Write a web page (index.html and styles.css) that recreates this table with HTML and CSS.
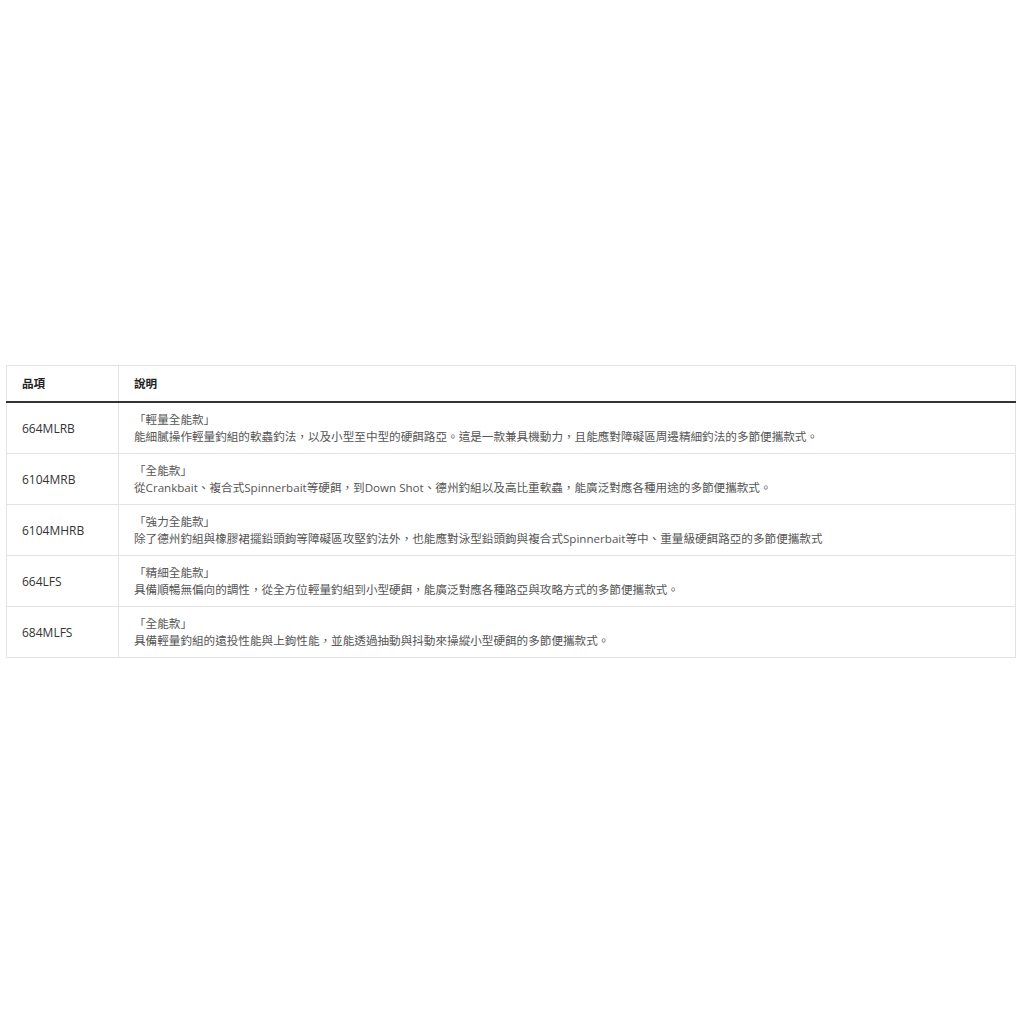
FILE: index.html
```html
<!DOCTYPE html>
<html lang="zh-Hant">
<head>
<meta charset="utf-8">
<link rel="stylesheet" href="styles.css">
</head>
<body>
<div class="page">
<table class="spec">
  <thead>
    <tr><th class="col-model">品項</th><th>說明</th></tr>
  </thead>
  <tbody>
    <tr><td class="model">664MLRB</td><td class="desc">「輕量全能款」<br>能細膩操作輕量釣組的軟蟲釣法，以及小型至中型的硬餌路亞。這是一款兼具機動力，且能應對障礙區周邊精細釣法的多節便攜款式。</td></tr>
    <tr><td class="model">6104MRB</td><td class="desc">「全能款」<br>從Crankbait、複合式Spinnerbait等硬餌，到Down Shot、德州釣組以及高比重軟蟲，能廣泛對應各種用途的多節便攜款式。</td></tr>
    <tr><td class="model">6104MHRB</td><td class="desc">「強力全能款」<br>除了德州釣組與橡膠裙擺鉛頭鉤等障礙區攻堅釣法外，也能應對泳型鉛頭鉤與複合式Spinnerbait等中、重量級硬餌路亞的多節便攜款式</td></tr>
    <tr><td class="model">664LFS</td><td class="desc">「精細全能款」<br>具備順暢無偏向的調性，從全方位輕量釣組到小型硬餌，能廣泛對應各種路亞與攻略方式的多節便攜款式。</td></tr>
    <tr><td class="model">684MLFS</td><td class="desc">「全能款」<br>具備輕量釣組的遠投性能與上鉤性能，並能透過抽動與抖動來操縱小型硬餌的多節便攜款式。</td></tr>
  </tbody>
</table>
</div>
</body>
</html>
```
FILE: styles.css
```css
html, body {
  margin: 0;
  padding: 0;
  background: #fff;
}
.page {
  padding: 365px 8px 0 6px;
}
.spec {
  width: 1010px;
  border-collapse: collapse;
  font-family: "Open Sans", "Noto Sans CJK TC", sans-serif;
  font-size: 11.6px;
  line-height: 17px;
  color: #333;
}
.spec th, .spec td {
  border: 1px solid #e3e3e3;
  padding: 8px 15px;
  text-align: left;
  vertical-align: middle;
}
.spec th {
  font-weight: bold;
  color: #222;
  padding: 9px 15px;
  border-bottom: 2px solid #333;
}
.col-model {
  width: 81px;
}
.model {
  font-size: 12px;
  color: #333;
}
.desc {
  color: #555;
}
```
